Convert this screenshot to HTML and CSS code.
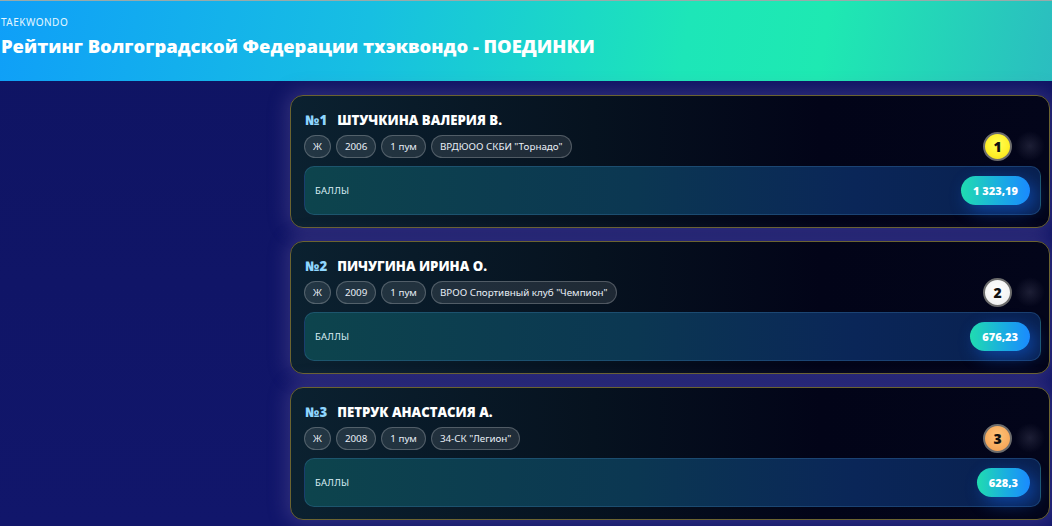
FILE: index.html
```html
<!DOCTYPE html>
<html lang="ru">
<head>
<meta charset="utf-8">
<title>Рейтинг</title>
<link rel="stylesheet" href="styles.css">
</head>
<body>
<header class="hero">
  <div class="kicker">TAEKWONDO</div>
  <h1 class="title">Рейтинг Волгоградской Федерации тхэквондо - ПОЕДИНКИ</h1>
</header>
<main class="board">
  <article class="card">
    <div class="name-row"><span class="num">№1</span><span class="name">ШТУЧКИНА ВАЛЕРИЯ В.</span></div>
    <div class="chips"><span class="chip">Ж</span><span class="chip">2006</span><span class="chip">1 пум</span><span class="chip">ВРДЮОО СКБИ "Торнадо"</span></div>
    <div class="score-box"><span class="score-label">БАЛЛЫ</span><span class="score">1 323,19</span></div>
    <span class="rank gold">1</span><span class="glow"></span>
  </article>
  <article class="card">
    <div class="name-row"><span class="num">№2</span><span class="name">ПИЧУГИНА ИРИНА О.</span></div>
    <div class="chips"><span class="chip">Ж</span><span class="chip">2009</span><span class="chip">1 пум</span><span class="chip">ВРОО Спортивный клуб "Чемпион"</span></div>
    <div class="score-box"><span class="score-label">БАЛЛЫ</span><span class="score">676,23</span></div>
    <span class="rank silver">2</span><span class="glow"></span>
  </article>
  <article class="card">
    <div class="name-row"><span class="num">№3</span><span class="name">ПЕТРУК АНАСТАСИЯ А.</span></div>
    <div class="chips"><span class="chip">Ж</span><span class="chip">2008</span><span class="chip">1 пум</span><span class="chip">34-СК "Легион"</span></div>
    <div class="score-box"><span class="score-label">БАЛЛЫ</span><span class="score">628,3</span></div>
    <span class="rank bronze">3</span><span class="glow"></span>
  </article>
</main>
</body>
</html>
```
FILE: styles.css
```css
* { box-sizing: border-box; }
html, body { margin: 0; height: 100%; }
body {
  font-family: "Noto Sans", "Open Sans", sans-serif;
  background: linear-gradient(180deg, #0b0c44 0px, #0f1463 40px, #11166b 100%);
  color: #fff;
  overflow: hidden;
}
.hero {
  height: 81px;
  padding: 15px 0 0 1px;
  background: linear-gradient(100deg, #0f9ff8 0%, #17bfe2 35%, #1de6b8 65%, #1ee9b2 78%, #2bbdc0 100%);
  border-top: 1px solid #9aa;
}
.kicker {
  font-size: 10px;
  letter-spacing: 0.5px;
  color: #e6f7ff;
  line-height: 13px;
}
.title {
  margin: 6px 0 0;
  font-family: "Open Sans", "Noto Sans", sans-serif;
  font-size: 18.4px;
  font-weight: 800;
  line-height: 22px;
  letter-spacing: 0;
}
.board {
  padding: 14px 2px 0 290px;
  display: flex;
  flex-direction: column;
  gap: 13px;
}
.card {
  position: relative;
  height: 133px;
  border: 1px solid #6b6330;
  border-radius: 13px;
  padding: 14px 8px 12px 13px;
  background: linear-gradient(90deg, #0b2130 0%, #06121f 40%, #020418 70%, #03051a 100%);
  box-shadow: 0 0 18px 4px rgba(110, 95, 160, 0.35);
  display: flex;
  flex-direction: column;
}
.name-row {
  display: flex;
  gap: 10px;
  font-family: "Open Sans", "Noto Sans", sans-serif;
  font-size: 13.2px;
  font-weight: 800;
  line-height: 20px;
  padding-left: 1px;
}
.num { color: #8fd6ff; }
.name { color: #fff; }
.chips {
  display: flex;
  gap: 5px;
  margin-top: 5px;
}
.chip {
  height: 23px;
  padding: 0 8px;
  border-radius: 12px;
  background: rgba(255, 255, 255, 0.1);
  border: 1px solid rgba(255, 255, 255, 0.22);
  font-size: 9.8px;
  line-height: 21px;
  color: #e8eef6;
}
.score-box {
  margin-top: 8px;
  height: 49px;
  border-radius: 10px;
  border: 1px solid rgba(60, 120, 170, 0.35);
  background: linear-gradient(90deg, #0d444d 0%, #0b3752 45%, #0a2658 75%, #09204f 100%);
  display: flex;
  align-items: center;
  justify-content: space-between;
  padding: 0 10px 0 10px;
}
.score-label {
  font-size: 9.5px;
  color: #d9eef5;
  letter-spacing: 0.2px;
}
.score {
  height: 29px;
  padding: 0 12px;
  border-radius: 15px;
  background: linear-gradient(90deg, #20dcb0 0%, #1aaee0 55%, #1a8aff 100%);
  box-shadow: 6px 6px 18px rgba(20, 110, 255, 0.45);
  font-family: "Open Sans", "Noto Sans", sans-serif;
  font-size: 11px;
  font-weight: 800;
  line-height: 29px;
  color: #fff;
}
.rank {
  position: absolute;
  right: 37px;
  top: 36px;
  width: 29px;
  height: 29px;
  border-radius: 50%;
  border: 2px solid #6c6c6c;
  display: flex;
  align-items: center;
  justify-content: center;
  font-family: "Open Sans", "Noto Sans", sans-serif;
  font-size: 14px;
  font-weight: 800;
  color: #111;
}
.gold { background: radial-gradient(circle at 50% 40%, #ffff55, #fff028 60%, #f0d818); }
.silver { background: radial-gradient(circle at 50% 40%, #ffffff, #f2f2f2 70%, #dcdcdc); }
.bronze { background: radial-gradient(circle at 50% 40%, #ffc47a, #f7a85a 70%, #e8914a); }
.glow {
  position: absolute;
  right: 4px;
  top: 35px;
  width: 30px;
  height: 30px;
  border-radius: 50%;
  background: radial-gradient(circle, rgba(120, 120, 150, 0.22) 0%, rgba(120, 120, 150, 0) 70%);
}
```
